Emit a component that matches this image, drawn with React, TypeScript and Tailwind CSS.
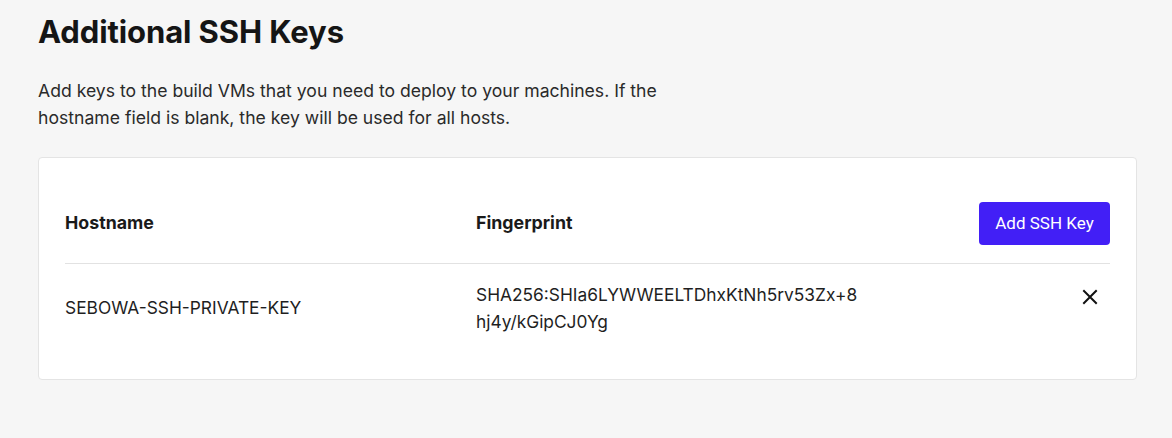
import React from 'react';

interface SshKey {
    id: string;
    hostname: string;
    fingerprint: string[];
}

const keys: SshKey[] = [
    {
        id: '1',
        hostname: 'SEBOWA-SSH-PRIVATE-KEY',
        fingerprint: ['SHA256:SHIa6LYWWEELTDhxKtNh5rv53Zx+8', 'hj4y/kGipCJ0Yg'],
    },
];

const App = () => {
    return (
        <div className="min-h-[438px] w-full bg-[#f6f6f6] pl-[38px] pr-[35px] pt-[14px] pb-[58px] font-['Inter',sans-serif] text-[#1a1a1a]">
            <h1 className="text-[31px] font-bold leading-[36px] tracking-[-0.1px] text-[#151515]">Additional SSH Keys</h1>

            <p className="mt-[27px] max-w-[680px] text-[17.6px] leading-[27px] text-[#2a2a2a]">
                Add keys to the build VMs that you need to deploy to your machines. If the hostname field is blank, the key will be used for all hosts.
            </p>

            {/* Keys table */}
            <div className="mt-[26px] rounded-[4px] border border-[#e4e4e4] bg-white px-[26px] pt-[44px] pb-[44px]">
                <div className="grid grid-cols-[411px_1fr_auto] items-center border-b border-[#e2e2e2] pb-[18px]">
                    <span className="text-[17.8px] font-bold text-[#1a1a1a]">Hostname</span>
                    <span className="text-[17.8px] font-bold text-[#1a1a1a]">Fingerprint</span>
                    <button className="h-[43px] w-[131px] rounded-[4px] bg-[#421ff6] font-['Roboto',sans-serif] text-[17px] text-white">
                        Add SSH Key
                    </button>
                </div>

                {keys.map((k) => (
                    <div key={k.id} className="grid grid-cols-[411px_1fr_auto] items-center pt-[17px]">
                        <span className="text-[17.35px] text-[#1f1f1f]">{k.hostname}</span>
                        <div className="text-[17.35px] leading-[27px] text-[#1f1f1f]">
                            {k.fingerprint.map((line) => (
                                <div key={line}>{line}</div>
                            ))}
                        </div>
                        <button className="mr-[12px] self-start pt-[8px]">
                            <svg width="16" height="16" viewBox="0 0 16 16" fill="none" stroke="#111" strokeWidth="2" strokeLinecap="square">
                                <path d="M2 2 L14 14 M14 2 L2 14" />
                            </svg>
                        </button>
                    </div>
                ))}
            </div>
        </div>
    );
};

export default App;
